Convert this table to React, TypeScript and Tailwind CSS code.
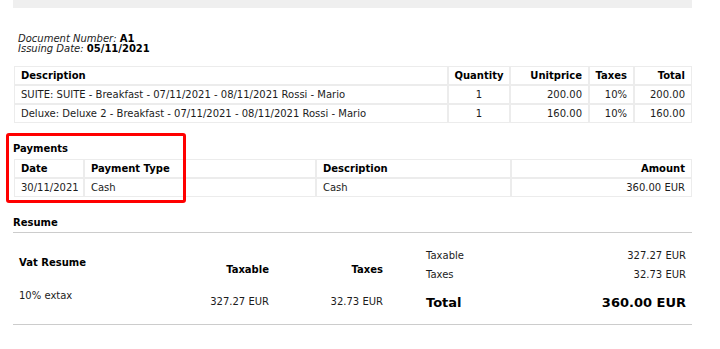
import React from "react";

type Col = { w: string; align: string; label: string };

const lineCols: Col[] = [
  { w: "w-[434px]", align: "justify-start", label: "Description" },
  { w: "w-[62px]", align: "justify-center", label: "Quantity" },
  { w: "w-[79px]", align: "justify-end", label: "Unitprice" },
  { w: "w-[45px]", align: "justify-end", label: "Taxes" },
  { w: "w-[58px]", align: "justify-end", label: "Total" },
];

const lines = [
  ["SUITE: SUITE - Breakfast - 07/11/2021 - 08/11/2021 Rossi - Mario", "1", "200.00", "10%", "200.00"],
  ["Deluxe: Deluxe 2 - Breakfast - 07/11/2021 - 08/11/2021 Rossi - Mario", "1", "160.00", "10%", "160.00"],
];

const paymentCols: Col[] = [
  { w: "w-[70px]", align: "justify-start", label: "Date" },
  { w: "w-[232px]", align: "justify-start", label: "Payment Type" },
  { w: "w-[195px]", align: "justify-start", label: "Description" },
  { w: "w-[181px]", align: "justify-end", label: "Amount" },
];

const payments = [["30/11/2021", "Cash", "Cash", "360.00 EUR"]];

function Grid({ cols, rows }: { cols: Col[]; rows: string[][] }) {
  return (
    <div className="flex flex-col">
      <div className="flex">
        {cols.map((c) => (
          <div key={c.label} className={`${c.w} ${c.align} h-[19px] flex items-center px-[6px] border border-[#ececec] font-bold text-black`}>
            {c.label}
          </div>
        ))}
      </div>
      {rows.map((r, i) => (
        <div key={i} className="flex">
          {r.map((v, j) => (
            <div key={j} className={`${cols[j].w} ${cols[j].align} h-[19px] flex items-center px-[6px] border border-[#ececec] whitespace-nowrap overflow-hidden`}>
              {v}
            </div>
          ))}
        </div>
      ))}
    </div>
  );
}

export default function App() {
  return (
    <div className="relative w-[720px] h-[349px] bg-white pl-[13px] pr-[28px] font-['DejaVu_Sans',sans-serif] text-[10px] leading-[12px] text-[#1c1c1c]">
      <div className="h-[8px] bg-[#efefef]" />

      <div className="mt-[26px] pl-[5px] leading-[10px]">
        <div>
          <span className="italic">Document Number:</span> <span className="font-bold text-black">A1</span>
        </div>
        <div>
          <span className="italic">Issuing Date:</span> <span className="font-bold text-black">05/11/2021</span>
        </div>
      </div>

      <div className="mt-[12px] ml-[1px]">
        <Grid cols={lineCols} rows={lines} />
      </div>

      <div className="mt-[20px] font-bold text-black">Payments</div>
      <div className="mt-[4px] ml-[1px]">
        <Grid cols={paymentCols} rows={payments} />
      </div>

      {/* highlight around the payments block */}
      <div className="absolute left-[6px] top-[133px] w-[180px] h-[70px] border-[3px] border-[#ff0000] rounded-[3px]" />

      <div className="mt-[20px] pb-[3px] border-b border-[#cccccc] font-bold text-black">Resume</div>

      <div className="flex h-[92px] border-b border-[#cccccc]">
        {/* vat resume */}
        <div className="w-[376px] flex flex-col">
          <div className="flex items-start">
            <div className="w-[177px] pl-[6px] pt-[24px] font-bold text-black">Vat Resume</div>
            <div className="w-[85px] pr-[6px] pt-[31px] text-right font-bold text-black">Taxable</div>
            <div className="w-[114px] pr-[6px] pt-[31px] text-right font-bold text-black">Taxes</div>
          </div>
          <div className="flex items-start">
            <div className="w-[177px] pl-[6px] pt-[14px]">10% extax</div>
            <div className="w-[85px] pr-[6px] pt-[20px] text-right">327.27 EUR</div>
            <div className="w-[114px] pr-[6px] pt-[20px] text-right">32.73 EUR</div>
          </div>
        </div>

        {/* totals */}
        <div className="ml-[31px] flex-1 flex flex-col pt-[13px] px-[6px]">
          <div className="h-[19px] flex items-center justify-between">
            <span>Taxable</span>
            <span>327.27 EUR</span>
          </div>
          <div className="h-[19px] flex items-center justify-between">
            <span>Taxes</span>
            <span>32.73 EUR</span>
          </div>
          <div className="mt-[11px] flex justify-between text-[13px] leading-[16px] font-bold text-black">
            <span>Total</span>
            <span>360.00 EUR</span>
          </div>
        </div>
      </div>
    </div>
  );
}
